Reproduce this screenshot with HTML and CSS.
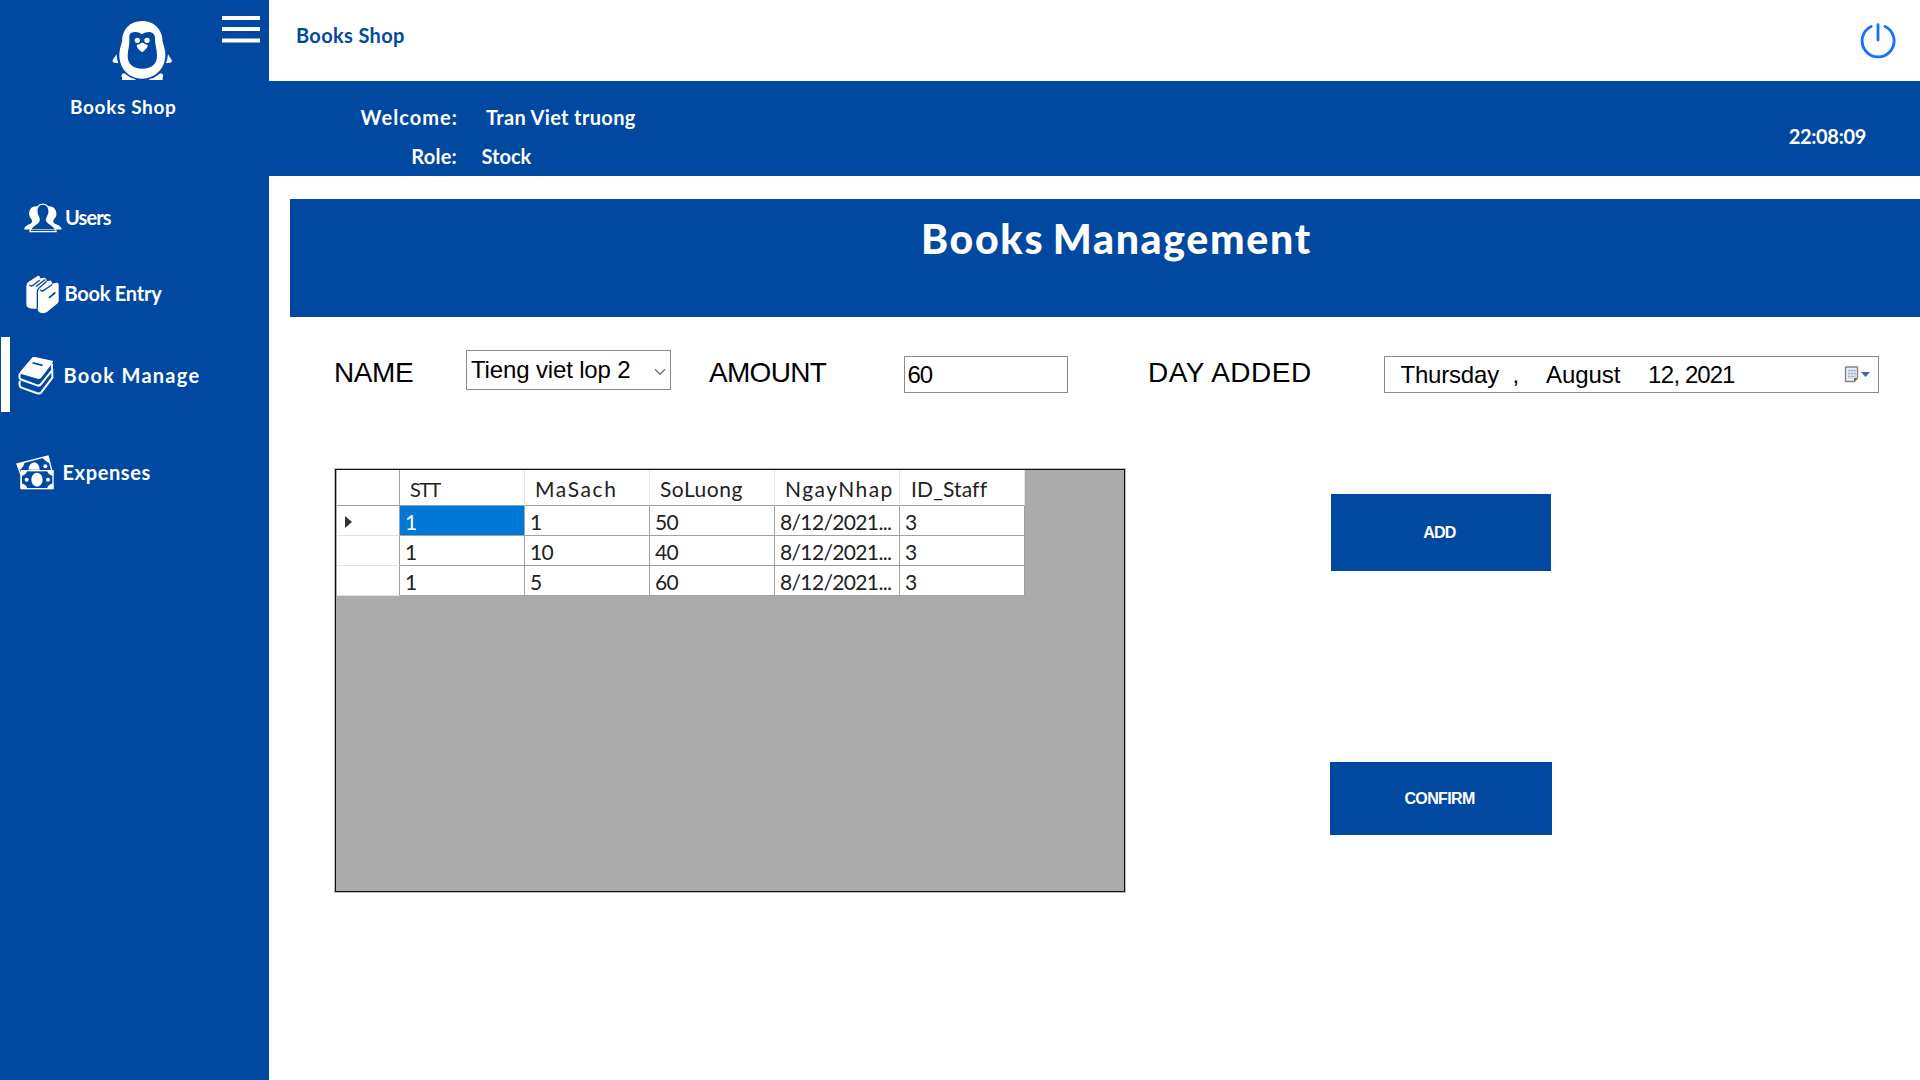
FILE: index.html
```
<!DOCTYPE html>
<html lang="en">
<head>
<meta charset="utf-8">
<title>Books Shop</title>
<link rel="stylesheet" href="styles.css">
</head>
<body>
<div class="app">
  <aside class="sidebar">
    <div class="brand">
      <svg class="penguin" viewBox="336 60 180 183">
        <path class="white" fill-rule="evenodd" d="M426 63C462 63 488 88 488 125C492 138 496 150 496 165C496 205 466 236 426 236C386 236 358 205 358 165C358 150 362 138 366 125C366 88 390 63 426 63ZM388 106C390 97 402 95 412 97C418 98 422 101 426 103C432 98 440 96 448 96C460 97 466 105 465 118C465 135 471 150 471 168C471 192 455 206 427 206C399 206 383 192 383 168C383 150 389 137 388 124Z"/>
        <circle class="white" cx="412" cy="121" r="8"/><circle class="white" cx="441" cy="121" r="8"/>
        <path class="white" d="M410 135L419 132Q427 124 435 132L443 135Q444 145 427 157Q410 146 410 135ZM350 163L338 180Q336 189 345 188L355 190Q350 176 350 163ZM504 163L515 180Q517 189 509 188L498 190Q503 176 504 163ZM367 221Q374 217 380 225Q390 234 406 237V240H366V232Q362 228 367 221ZM487 221Q480 217 474 225Q464 234 448 237V240H488V232Q492 228 487 221Z"/>
      </svg>
      <svg class="burger" viewBox="0 0 38 30"><path d="M0 5h38M0 16h38M0 27.500h38"/></svg>
    </div>
    <div class="brand-name">Books Shop</div>
    <nav class="nav">
      <a class="item users">
        <svg class="icon" viewBox="70 40 115 90">
          <path class="white" d="M112 50C94 46 83 60 86 76C88 86 96 90 94 97C92 105 70 106 71 120H90L120 100ZM141 50C159 46 170 60 168 76C166 86 157 90 159 97C161 105 184 106 184 120H163L134 100Z"/>
          <path class="cut" d="M127 43C113 43 107 54 109 68C110 78 117 84 116 92C114 104 90 106 88 126H167C165 106 141 104 138 92C138 84 144 78 146 68C147 54 141 43 127 43Z"/>
          <path class="line" d="M88 120H166"/>
        </svg><span>Users</span></a>
      <a class="item entry">
        <svg class="icon" viewBox="78 257 99 116">
          <path class="white" d="M79 290Q79 281 86 277L114 259Q120 258 120 266L134 265Q141 268 140 275L152 273Q157 277 156 283L170 280Q176 279 176 286V334Q176 339 172 342L142 367Q134 373 122 370Q113 367 113 357Q96 360 84 354Q79 351 79 346Z"/>
          <path class="gap thin" d="M88 287L95 290L119 272M112 357V308Q112 298 119 294L140 275M108 291L136 270M121 301L128 305L157 285"/>
          <path class="gap" d="M147 325L166 309"/>
        </svg><span>Book Entry</span></a>
      <a class="item manage active">
        <svg class="icon" viewBox="55 80 107 116">
          <path class="white" d="M98 84Q101 82 106 83L157 94Q161 96 158 100L125 143Q121 149 113 148L62 133Q58 130 62 126Z"/>
          <path class="gap" d="M98 100L128 108"/>
          <path class="page" d="M61 132Q56 145 64 150L114 168Q120 169 124 163L159 119M156 103V119M61 154Q56 168 65 174L112 191Q120 193 124 188L159 142M157 126V142"/>
        </svg><span>Book Manage</span></a>
      <a class="item expenses">
        <svg class="icon" viewBox="48 376 114 105">
          <path class="bill" d="M63 428L63 477M63 436L51 403L144 379L155 421"/>
          <path class="white" d="M50 403L74 397Q70 414 60 421ZM126 383L145 379L151 401Q138 398 126 383ZM86 420Q86 400 104 398Q118 402 119 420Z"/>
          <circle class="white" cx="136" cy="410" r="6"/>
          <rect class="bill" x="64" y="423" width="95" height="54"/>
          <path class="white" d="M63 422H82Q80 436 63 439ZM160 422H141Q143 436 160 439ZM63 478H82Q80 464 63 461ZM160 478H141Q143 464 160 461Z"/>
          <ellipse class="white" cx="111" cy="450" rx="17" ry="21"/>
          <circle class="white" cx="80" cy="450" r="6"/><circle class="white" cx="144" cy="450" r="6"/>
        </svg><span>Expenses</span></a>
    </nav>
  </aside>
  <main class="main">
    <header class="topbar">
      <div class="page-name">Books Shop</div>
      <svg class="power" viewBox="0 0 36 36"><path d="M11.2 3.4A16 16 0 1 0 25 3.4M18 1.6V17"/></svg>
    </header>
    <section class="session">
      <dl class="who">
        <dt class="welcome">Welcome:</dt><dd class="user">Tran Viet truong</dd>
        <dt>Role:</dt><dd class="role">Stock</dd>
      </dl>
      <time class="clock">22:08:09</time>
    </section>
    <h1 class="title">Books Management</h1>
    <form class="fields">
      <label class="l-name">NAME</label>
      <div class="box combo"><span>Tieng viet lop 2</span><svg class="chevron" viewBox="0 0 12 8"><path d="M1 1.2L6 6.2L11 1.2"/></svg></div>
      <label class="l-amount">AMOUNT</label>
      <div class="box amount">60</div>
      <label class="l-day">DAY ADDED</label>
      <div class="box date">
        <span class="weekday">Thursday</span><span class="comma">,</span><span class="month">August</span><span class="day">12,</span><span class="year">2021</span>
        <svg class="calendar" viewBox="0 0 27 18">
          <path d="M2 1h11.500v11l-3 3.500H1.500V1.500z" fill="#e9edf4" stroke="#8d8283" stroke-width="1.400"/>
          <path d="M4 4.500h7.500M4 7.500h7.500M4 10.500h7.500M5 3.500v9M8 3.500v9M11 3.500v8" stroke="#a9b7cc" stroke-width=".9"/>
          <path d="M10 15.500v-3.500h3.500z" fill="#6b6465"/>
          <path d="M17 6h9l-4.500 5z" fill="#45659c"/>
        </svg>
      </div>
    </form>
    <section class="work">
      <div class="grid">
        <table>
          <tr><th class="rh"></th><th class="h1">STT</th><th class="h2">MaSach</th><th class="h3">SoLuong</th><th class="h4">NgayNhap</th><th class="h5">ID_Staff</th></tr>
          <tr><td class="rh"><svg class="marker" viewBox="0 0 7 12"><path d="M0 0L7 6L0 12z"/></svg></td><td class="one sel">1</td><td class="one">1</td><td>50</td><td class="dt">8/12/2021...</td><td>3</td></tr>
          <tr><td class="rh"></td><td class="one">1</td><td class="one">10</td><td>40</td><td class="dt">8/12/2021...</td><td>3</td></tr>
          <tr><td class="rh"></td><td class="one">1</td><td>5</td><td>60</td><td class="dt">8/12/2021...</td><td>3</td></tr>
        </table>
      </div>
      <div class="actions">
        <button class="add">ADD</button>
        <button class="confirm">CONFIRM</button>
      </div>
    </section>
  </main>
</div>
</body>
</html>
```
FILE: styles.css
```
* { box-sizing: border-box; }
body { margin: 0; background: #fff; font: 700 20px/24px Lato, sans-serif; color: #fff; }
.app { display: flex; width: 1920px; height: 1080px; overflow: hidden; }

.sidebar { width: 269px; background: #0048a0; display: flex; flex-direction: column; }
.brand { display: flex; align-items: flex-start; padding: 20px 0 0 112px; }
.penguin { width: 60px; height: 61px; }
.burger { width: 38px; height: 30px; margin: -7px 0 0 50px; stroke: #fff; stroke-width: 4; }
.brand-name { margin: 14px 0 0 70px; font-size: 19px; letter-spacing: .64px; }
.white { fill: #fff; }
.cut { fill: #0048a0; stroke: #fff; stroke-width: 4; }
.line { fill: none; stroke: #fff; stroke-width: 2; }
.gap { fill: none; stroke: #0048a0; stroke-width: 5; }
.thin { stroke-width: 4; }
.page { fill: none; stroke: #fff; stroke-width: 6; stroke-linejoin: round; }
.bill { fill: #0048a0; stroke: #fff; stroke-width: 4; }

.nav { display: flex; flex-direction: column; margin-top: 60px; }
.item { display: flex; align-items: center; height: 75px; }
.icon { flex: none; }
.users { padding-left: 23.5px; }
.users .icon { width: 38px; height: 30px; margin-top: 2px; }
.users span { margin-left: 3.5px; letter-spacing: -.9px; }
.entry { padding-left: 26px; margin-top: 1px; }
.entry .icon { width: 33px; height: 39px; margin-top: 3px; }
.entry span { margin-left: 5.5px; letter-spacing: -.25px; }
.manage { padding-left: 8px; margin-top: 7px; }
.manage .icon { width: 36px; height: 39px; margin-top: 2px; }
.manage span { margin-left: 9.5px; letter-spacing: 1.28px; }
.active { margin-left: 1px; border-left: 9px solid #fff; }
.expenses { padding-left: 16px; margin-top: 22px; }
.expenses .icon { width: 38px; height: 35px; margin-top: 1px; }
.expenses span { margin-left: 8.5px; letter-spacing: .61px; }

.main { flex: 1; display: flex; flex-direction: column; }
.topbar { height: 81px; padding: 23px 24px 0 27px; display: flex; justify-content: space-between; align-items: flex-start; }
.page-name { color: #0048a0; letter-spacing: .34px; }
.power { width: 36px; height: 36px; fill: none; stroke: #1470ff; stroke-width: 2.8; stroke-linecap: round; }

.session { height: 95px; background: #0048a0; display: flex; justify-content: space-between; padding: 24px 54px 0 91px; }
.who { margin: 0; display: grid; grid-template-columns: 97px auto; grid-auto-rows: 39px; align-content: start; }
.who dt { text-align: right; letter-spacing: .25px; }
.who .welcome { letter-spacing: 1.05px; margin-right: -1px; }
.who dd { margin: 0; }
.user { padding-left: 29px; letter-spacing: .34px; }
.role { padding-left: 24.5px; }
.clock { margin-top: 19px; letter-spacing: -.33px; }

.title { margin: 23px 0 0 21px; height: 118px; padding: 16px 0 0 631px; background: #0048a0; font: 900 41px/48px Lato, sans-serif; letter-spacing: 1.7px; word-spacing: -3px; }

.fields { display: flex; align-items: flex-start; height: 42px; margin: 33px 0 0 65px; color: #000; font: 24px/28px "Liberation Sans", Arial, sans-serif; }
.fields label { font-size: 28px; line-height: 32px; margin-top: 7px; flex: none; }
.l-name { width: 132px; letter-spacing: -.41px; }
.l-amount { width: 195px; margin-left: 38px; letter-spacing: -.7px; }
.l-day { width: 236px; margin-left: 80px; letter-spacing: .49px; }
.box { display: flex; border: 1px solid #8a8a8a; background: #fff; height: 37px; margin-top: 6px; padding: 3.5px 0 0 4px; flex: none; white-space: nowrap; }
.combo { width: 205px; height: 40px; margin-top: 0; padding-top: 5px; letter-spacing: -.15px; justify-content: space-between; padding-right: 4px; }
.chevron { width: 12px; height: 8px; margin-top: 12px; fill: none; stroke: #777; stroke-width: 1.5; }
.amount { width: 164px; padding-left: 2.5px; letter-spacing: -1.1px; }
.date { width: 495px; padding-left: 15.5px; }
.weekday { width: 112px; letter-spacing: -.2px; }
.comma { width: 33.5px; }
.month { width: 102px; letter-spacing: -.05px; }
.day { width: 37px; letter-spacing: -.6px; }
.year { width: 159px; letter-spacing: -1px; }
.calendar { width: 27px; height: 18px; margin-top: 5.5px; }

.work { display: flex; align-items: flex-start; margin: 77px 0 0 66px; }
.grid { width: 790px; height: 423px; background: #ababab; border: 1px solid #111; box-shadow: 0 0 0 1px #bbb; padding-left: 1px; }
table { table-layout: fixed; width: 688px; border-spacing: 0; font-weight: 400; font-size: 21px; color: #222; }
th, td { height: 30px; padding: 4px 0 0 5px; background: #fff; border: solid #a0a0a0; border-width: 0 1px 1px 0; text-align: left; vertical-align: top; line-height: 24px; white-space: nowrap; letter-spacing: -.8px; }
th { height: 36px; width: 125px; padding: 6.5px 0 0 10px; font-weight: 400; border-right-color: #e2e2e2; }
.rh { width: 63px; padding: 0; border-right-color: #a0a0a0; }
td.rh { border-bottom-color: #e2e2e2; }
.one { padding-left: 5px; }
.sel { background: #0078d7; color: #fff; }
.h1 { font-size: 20px; letter-spacing: -1.6px; }
.h2 { letter-spacing: 1.6px; }
.h3 { letter-spacing: .5px; }
.h4 { letter-spacing: 1.45px; }
.h5 { letter-spacing: .15px; padding-left: 11px; }
.dt { letter-spacing: -.65px; }
.marker { display: block; width: 7px; height: 12px; margin: 9.5px 0 0 8px; fill: #333; }

.actions { display: flex; flex-direction: column; align-items: center; gap: 191px; margin: 25px 0 0 205px; }
.actions button { background: #0048a0; border: 0; padding: 1px 3px 0 0; color: #fff; font: 700 16px/20px "Liberation Sans", Arial, sans-serif; }
.add { width: 220px; height: 77px; letter-spacing: -.8px; }
.confirm { width: 222px; height: 73px; letter-spacing: -.64px; }
```
